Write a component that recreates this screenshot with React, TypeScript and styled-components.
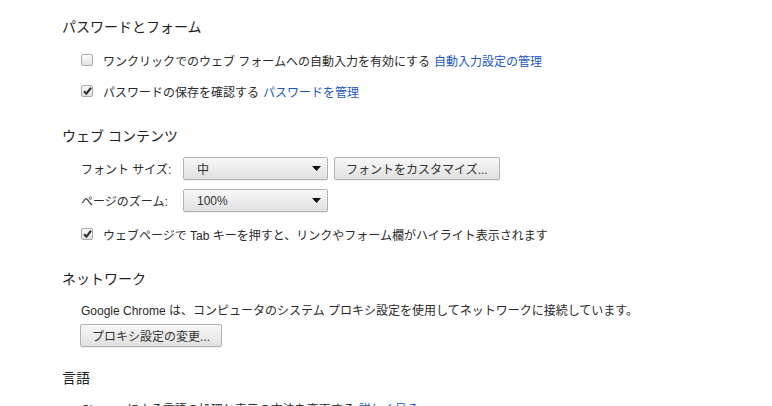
import React from 'react';
import styled, { createGlobalStyle } from 'styled-components';

const GlobalStyle = createGlobalStyle`
    html, body {
        margin: 0;
        padding: 0;
        background: #fff;
    }
    body {
        font-family: "Liberation Sans", "Noto Sans CJK JP", sans-serif;
        font-size: 12px;
        color: #2a2a2a;
    }
`;

const Page = styled.div`
    width: 772px;
    height: 406px;
    overflow: hidden;
    padding: 17px 0 0 62px;
    box-sizing: border-box;
`;

const Section = styled.section<{ $top?: number }>`
    margin-top: ${p => p.$top ?? 25}px;
`;

const Heading = styled.h3`
    margin: 0;
    font-size: 14px;
    font-weight: normal;
    line-height: 20px;
    color: #1e1e1e;
`;

const Body = styled.div`
    padding-left: 19px;
    display: flex;
    flex-direction: column;
`;

const Row = styled.div<{ $top: number }>`
    display: flex;
    align-items: center;
    min-height: 20px;
    margin-top: ${p => p.$top}px;
    white-space: nowrap;
`;

const Box = styled.span<{ $checked?: boolean }>`
    width: 10px;
    height: 10px;
    margin-right: 10px;
    border: 1px solid #a9a9a9;
    border-radius: 2px;
    background: linear-gradient(#fdfdfd, #e2e2e2);
    display: flex;
    align-items: center;
    justify-content: center;
    flex-shrink: 0;

    svg {
        display: ${p => (p.$checked ? 'block' : 'none')};
    }
`;

const Link = styled.a`
    color: #1a57c6;
    margin-left: 4px;
    text-decoration: none;
    cursor: pointer;
`;

const Label = styled.span`
    width: 102px;
    flex-shrink: 0;
`;

const ButtonBase = styled.button`
    font: inherit;
    font-size: 12px;
    color: #333;
    height: 23px;
    box-sizing: border-box;
    border: 1px solid #b2b2b2;
    border-radius: 2px;
    background: linear-gradient(#f8f8f8, #e0e0e0);
    box-shadow: 0 1px 0 rgba(0, 0, 0, 0.06);
    padding: 0 11px;
    display: flex;
    align-items: center;
`;

const SelectBox = styled(ButtonBase)`
    width: 145px;
    justify-content: space-between;
    padding: 0 6px 0 13px;
`;

const PushButton = styled(ButtonBase)<{ $gap?: number }>`
    margin-left: ${p => p.$gap ?? 0}px;
`;

const Check = () => (
    <svg width="9" height="8" viewBox="0 0 9 8">
        <path d="M1 4.2 L3.4 6.6 L8 0.8" fill="none" stroke="#333" strokeWidth="2.2" />
    </svg>
);

const CheckRow: React.FC<{ checked?: boolean; top: number; children: React.ReactNode }> = ({ checked, top, children }) => (
    <Row $top={top}>
        <Box $checked={checked}><Check /></Box>
        <span>{children}</span>
    </Row>
);

const Arrow = () => (
    <svg width="9" height="5" viewBox="0 0 9 5">
        <path d="M0 0 H9 L4.5 5 Z" fill="#111" />
    </svg>
);

const Select: React.FC<{ value: string }> = ({ value }) => (
    <SelectBox type="button">
        <span>{value}</span>
        <Arrow />
    </SelectBox>
);

export default function App() {
    return (
        <>
            <GlobalStyle />
            <Page>
                <Section $top={0}>
                    <Heading>パスワードとフォーム</Heading>
                    <Body>
                        <CheckRow top={13}>
                            ワンクリックでのウェブ フォームへの自動入力を有効にする
                            <Link>自動入力設定の管理</Link>
                        </CheckRow>
                        <CheckRow checked top={11}>
                            パスワードの保存を確認する
                            <Link>パスワードを管理</Link>
                        </CheckRow>
                    </Body>
                </Section>

                <Section>
                    <Heading>ウェブ コンテンツ</Heading>
                    <Body>
                        <Row $top={11}>
                            <Label>フォント サイズ:</Label>
                            <Select value="中" />
                            <PushButton type="button" $gap={6}>フォントをカスタマイズ...</PushButton>
                        </Row>
                        <Row $top={9}>
                            <Label>ページのズーム:</Label>
                            <Select value="100%" />
                        </Row>
                        <CheckRow checked top={12}>
                            ウェブページで Tab キーを押すと、リンクやフォーム欄がハイライト表示されます
                        </CheckRow>
                    </Body>
                </Section>

                <Section>
                    <Heading>ネットワーク</Heading>
                    <Body>
                        <Row $top={10}>
                            Google Chrome は、コンピュータのシステム プロキシ設定を使用してネットワークに接続しています。
                        </Row>
                        <Row $top={5}>
                            <PushButton type="button" $gap={-1}>プロキシ設定の変更...</PushButton>
                        </Row>
                    </Body>
                </Section>

                <Section $top={21}>
                    <Heading>言語</Heading>
                    <Body>
                        <Row $top={10}>
                            Chrome による言語の処理と表示の方法を変更する
                            <Link>詳しく見る</Link>
                        </Row>
                    </Body>
                </Section>
            </Page>
        </>
    );
}
